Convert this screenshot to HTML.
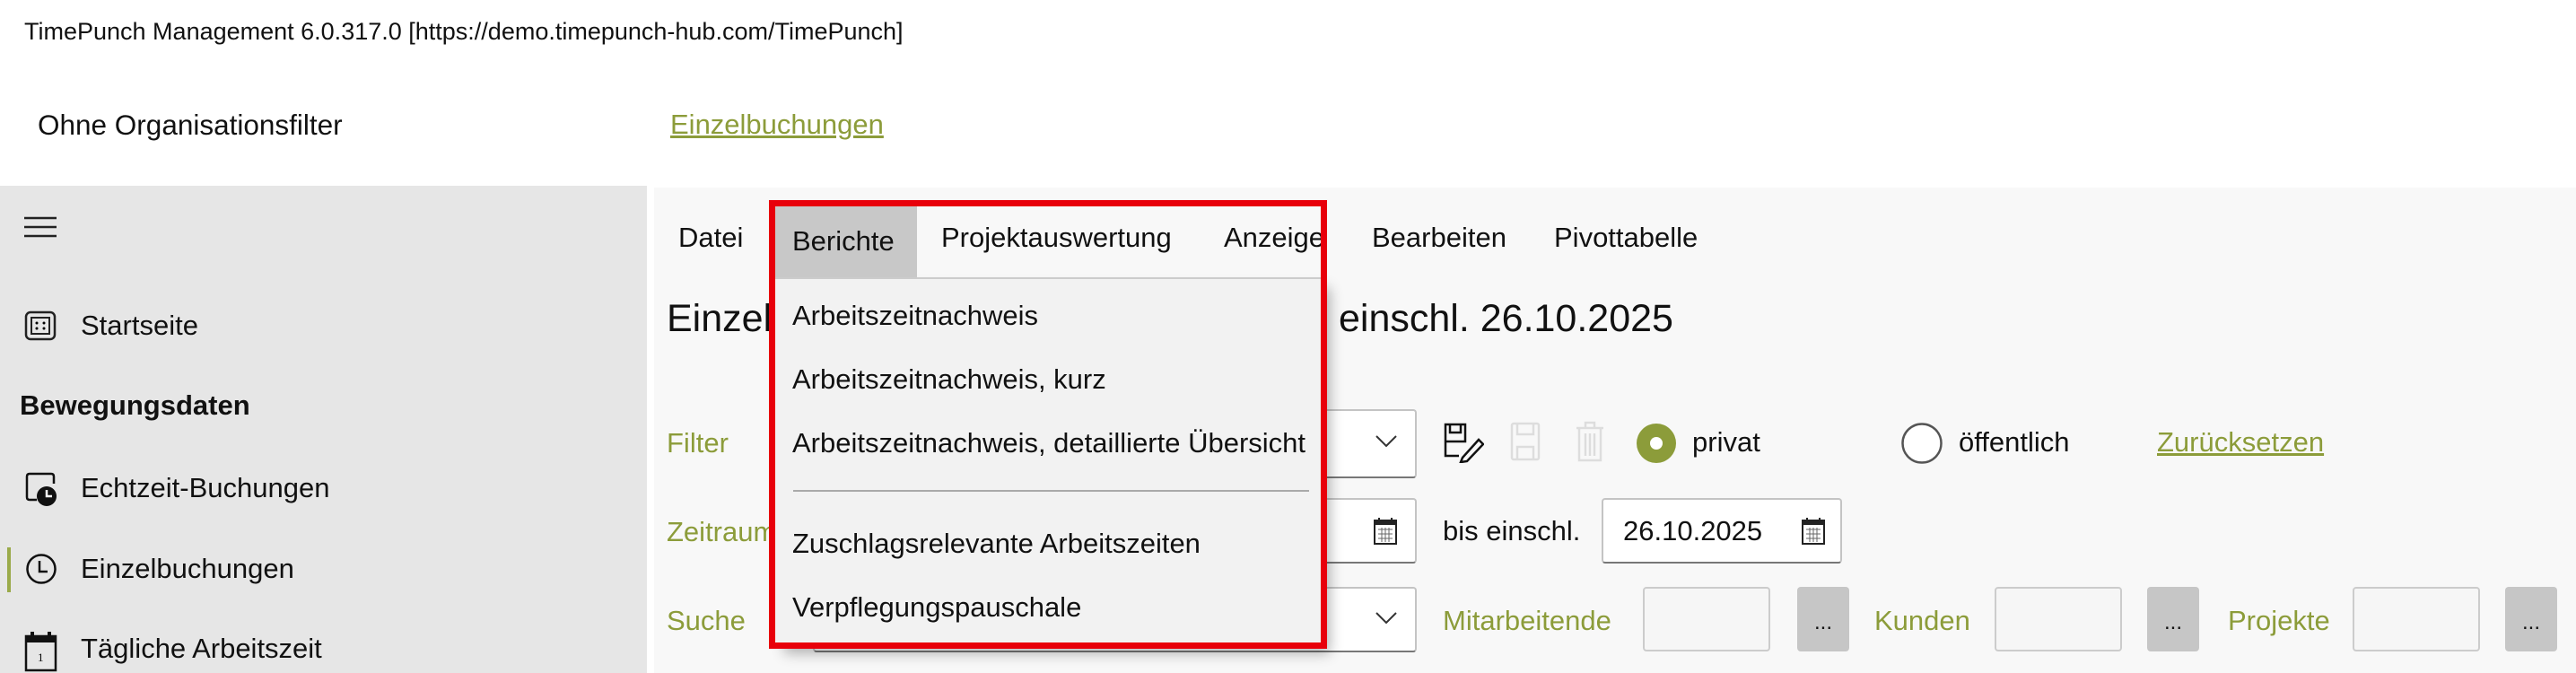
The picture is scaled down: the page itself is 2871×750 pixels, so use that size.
<!DOCTYPE html>
<html><head><meta charset="utf-8"><style>
*{margin:0;padding:0;box-sizing:border-box}
body{width:2871px;height:750px;overflow:hidden;background:#fff;font-family:"Liberation Sans",sans-serif;color:#111;position:relative}
.a{position:absolute;white-space:nowrap;line-height:40px}
.g{color:#8c9c3a}
.t{font-size:31px}
.box{position:absolute;background:#fff;border:2px solid #c4c4c4;border-bottom-color:#777;border-radius:4px}
.inp{position:absolute;background:#f6f6f6;border:2px solid #ccc;border-radius:4px}
.btn{position:absolute;background:#c6c6c6;border-radius:4px;text-align:center;font-size:24px;line-height:90px}
</style></head><body>
<div class="a" style="left:27px;top:15px;font-size:27px">TimePunch Management 6.0.317.0 [https://demo.timepunch-hub.com/TimePunch]</div>
<div class="a" style="left:42px;top:119px;font-size:31.5px">Ohne Organisationsfilter</div>
<div class="a t g" style="left:747px;top:119px;text-decoration:underline">Einzelbuchungen</div>

<!-- sidebar -->
<div style="position:absolute;left:0;top:207px;width:721px;height:543px;background:#e6e6e6"></div>
<div style="position:absolute;left:729px;top:209px;width:2142px;height:541px;background:#f8f8f8"></div>
<svg style="position:absolute;left:26px;top:240px" width="38" height="26"><path d="M1 3H37M1 13H37M1 23H37" stroke="#222" stroke-width="2.5"/></svg>
<svg style="position:absolute;left:27px;top:346px" width="36" height="34"><rect x="2" y="2" width="32" height="30" rx="5" fill="none" stroke="#222" stroke-width="2.5"/><rect x="8" y="8" width="20" height="18" fill="none" stroke="#222" stroke-width="2"/><circle cx="14" cy="14" r="1.5"/><circle cx="22" cy="14" r="1.5"/><circle cx="14" cy="20" r="1.5"/><circle cx="22" cy="20" r="1.5"/></svg>
<div class="a t" style="left:90px;top:343px">Startseite</div>
<div class="a t" style="left:22px;top:432px;font-weight:bold">Bewegungsdaten</div>
<svg style="position:absolute;left:27px;top:525px" width="38" height="40"><path d="M14 32H6Q3 32 3 29V6Q3 3 6 3H30Q33 3 33 6V14" fill="none" stroke="#111" stroke-width="2.5"/><circle cx="25" cy="28" r="11" fill="#111"/><path d="M25 21V28H31" stroke="#fff" stroke-width="2.5" fill="none"/></svg>
<div class="a t" style="left:90px;top:524px">Echtzeit-Buchungen</div>
<div style="position:absolute;left:8px;top:610px;width:4px;height:50px;background:#9aaa4a"></div>
<svg style="position:absolute;left:28px;top:616px" width="36" height="36"><circle cx="18" cy="18" r="15.5" fill="none" stroke="#111" stroke-width="2.5"/><path d="M16 9V21H25" stroke="#111" stroke-width="2.5" fill="none"/></svg>
<div class="a t" style="left:90px;top:614px">Einzelbuchungen</div>
<svg style="position:absolute;left:27px;top:702px" width="38" height="48"><rect x="2" y="7" width="33" height="38" fill="none" stroke="#111" stroke-width="2.5"/><rect x="2" y="7" width="33" height="7" fill="#111"/><path d="M9 2V10M28 2V10" stroke="#111" stroke-width="4"/><text x="15" y="35" font-size="13" font-family="Liberation Serif">1</text></svg>
<div class="a t" style="left:90px;top:703px">Tägliche Arbeitszeit</div>

<!-- menu -->
<div class="a t" style="left:756px;top:245px">Datei</div>
<div class="a t" style="left:1049px;top:245px">Projektauswertung</div>
<div class="a t" style="left:1364px;top:245px">Anzeige</div>
<div class="a t" style="left:1529px;top:245px">Bearbeiten</div>
<div class="a t" style="left:1732px;top:245px">Pivottabelle</div>
<div class="a" style="left:743px;top:330px;font-size:43px;line-height:50px">Einzel</div>
<div class="a" style="left:1492px;top:330px;font-size:43px;line-height:50px">einschl. 26.10.2025</div>

<!-- form -->
<div class="a t g" style="left:743px;top:474px">Filter</div>
<div class="a t g" style="left:743px;top:573px">Zeitraum</div>
<div class="a t g" style="left:743px;top:672px">Suche</div>
<div class="box" style="left:906px;top:456px;width:673px;height:77px"></div>
<svg style="position:absolute;left:1532px;top:484px" width="26" height="16"><path d="M2 2L13 13L24 2" fill="none" stroke="#333" stroke-width="2"/></svg>
<svg style="position:absolute;left:1608px;top:470px" width="46" height="46"><path d="M3 3H25V22H3Z M8 3V12H20V3 M3 22V38H18" fill="none" stroke="#111" stroke-width="2.5"/><path d="M22 40L40 20L45 25L27 44L20 45Z" fill="none" stroke="#111" stroke-width="2.5"/></svg>
<svg style="position:absolute;left:1683px;top:470px" width="34" height="44"><rect x="2" y="2" width="30" height="40" rx="2" fill="none" stroke="#ddd" stroke-width="2.5"/><path d="M8 2V14H26V2M8 42V28H26V42" fill="none" stroke="#ddd" stroke-width="2.5"/></svg>
<svg style="position:absolute;left:1755px;top:468px" width="34" height="48"><path d="M2 9H32M12 9V3H22V9M5 9V45H29V9M12 15V40M17 15V40M22 15V40" fill="none" stroke="#ddd" stroke-width="2.5"/></svg>
<svg style="position:absolute;left:1822px;top:470px" width="48" height="48"><circle cx="24" cy="24" r="22" fill="#8c9c3a"/><circle cx="24" cy="24" r="7" fill="#fff"/></svg>
<div class="a t" style="left:1886px;top:473px">privat</div>
<svg style="position:absolute;left:2118px;top:470px" width="48" height="48"><circle cx="24" cy="24" r="21.5" fill="#fff" stroke="#555" stroke-width="2.5"/></svg>
<div class="a t" style="left:2183px;top:473px">öffentlich</div>
<div class="a t g" style="left:2404px;top:473px;text-decoration:underline">Zurücksetzen</div>

<div class="box" style="left:906px;top:555px;width:673px;height:73px"></div>
<svg style="position:absolute;left:1530px;top:576px" width="28" height="32"><rect x="2" y="4" width="24" height="26" fill="none" stroke="#222" stroke-width="2"/><rect x="2" y="4" width="24" height="5" fill="#222"/><path d="M7 1V6M21 1V6" stroke="#222" stroke-width="2"/><path d="M6 14H22M6 19H22M6 24H22M10 12V28M14 12V28M18 12V28" stroke="#666" stroke-width="1"/></svg>
<div class="a t" style="left:1608px;top:572px">bis einschl.</div>
<div class="box" style="left:1785px;top:555px;width:268px;height:73px"></div>
<div class="a t" style="left:1809px;top:572px">26.10.2025</div>
<svg style="position:absolute;left:2007px;top:576px" width="28" height="32"><rect x="2" y="4" width="24" height="26" fill="none" stroke="#222" stroke-width="2"/><rect x="2" y="4" width="24" height="5" fill="#222"/><path d="M7 1V6M21 1V6" stroke="#222" stroke-width="2"/><path d="M6 14H22M6 19H22M6 24H22M10 12V28M14 12V28M18 12V28" stroke="#666" stroke-width="1"/></svg>

<div class="box" style="left:906px;top:654px;width:673px;height:73px"></div>
<svg style="position:absolute;left:1532px;top:681px" width="26" height="16"><path d="M2 2L13 13L24 2" fill="none" stroke="#333" stroke-width="2"/></svg>
<div class="a t g" style="left:1608px;top:672px">Mitarbeitende</div>
<div class="inp" style="left:1831px;top:654px;width:142px;height:72px"></div>
<div class="btn" style="left:2003px;top:654px;width:58px;height:72px;line-height:80px">...</div>
<div class="a t g" style="left:2089px;top:672px">Kunden</div>
<div class="inp" style="left:2223px;top:654px;width:142px;height:72px"></div>
<div class="btn" style="left:2393px;top:654px;width:58px;height:72px;line-height:80px">...</div>
<div class="a t g" style="left:2483px;top:672px">Projekte</div>
<div class="inp" style="left:2622px;top:654px;width:142px;height:72px"></div>
<div class="btn" style="left:2792px;top:654px;width:58px;height:72px;line-height:80px">...</div>

<!-- dropdown -->
<div style="position:absolute;left:864px;top:309px;width:608px;height:407px;background:#f2f2f2;box-shadow:10px 12px 14px rgba(0,0,0,.3)"></div>
<div style="position:absolute;left:864px;top:230px;width:158px;height:79px;background:#c8c8c8"></div>
<div style="position:absolute;left:864px;top:309px;width:608px;height:2px;background:#ccc"></div>
<div class="a t" style="left:883px;top:249px">Berichte</div>
<div class="a t" style="left:883px;top:332px">Arbeitszeitnachweis</div>
<div class="a t" style="left:883px;top:403px">Arbeitszeitnachweis, kurz</div>
<div class="a t" style="left:883px;top:474px">Arbeitszeitnachweis, detaillierte Übersicht</div>
<div style="position:absolute;left:884px;top:546px;width:575px;height:2px;background:#aaa"></div>
<div class="a t" style="left:883px;top:586px">Zuschlagsrelevante Arbeitszeiten</div>
<div class="a t" style="left:883px;top:657px">Verpflegungspauschale</div>
<div style="position:absolute;left:857px;top:223px;width:622px;height:500px;border:7px solid #e8000b"></div>
</body></html>
